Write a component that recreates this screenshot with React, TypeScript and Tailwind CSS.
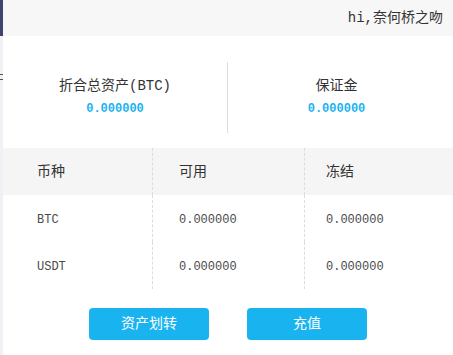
import React from "react"

const mono = { fontFamily: '"Liberation Mono", "Noto Sans CJK SC", monospace' }

const rows = [
  { coin: "BTC", avail: "0.000000", frozen: "0.000000" },
  { coin: "USDT", avail: "0.000000", frozen: "0.000000" },
]

const cols = ["w-[150px] pl-[34px]", "w-[152px] pl-[26px]", "flex-1 pl-[21px]"]

export default function App() {
  return (
    <div
      className="flex w-[453px] h-[355px] overflow-hidden bg-white text-[#333]"
      style={{ fontFamily: '"Liberation Mono", "Noto Sans CJK SC", monospace' }}
    >
      {/* page behind the panel */}
      <div className="w-[3px] flex flex-col shrink-0 overflow-hidden">
        <div className="h-[36px] bg-[#3d4470]"></div>
        <div className="flex-1 bg-[#f0f0f5] flex flex-col">
          <div className="mt-[38px] h-px w-[3px] bg-[#555]"></div>
          <div className="mt-[4px] h-px w-[3px] bg-[#555]"></div>
        </div>
      </div>

      <div className="flex-1 flex flex-col">
        {/* top bar */}
        <div className="h-[36px] bg-[#f7f7f7] flex items-center justify-end pr-[10px] text-[14px] text-[#333]">
          hi,奈何桥之吻
        </div>

        {/* summary */}
        <div className="flex h-[112px]">
          <div className="w-[224px] flex flex-col items-center pt-[40px]">
            <div className="text-[14px] leading-[20px]">折合总资产(BTC)</div>
            <div className="mt-[4px] text-[12px] leading-[18px] text-[#1ab3ef] font-semibold" style={mono}>
              0.000000
            </div>
          </div>
          <div className="w-px h-[71px] mt-[26px] bg-[#dddddd]"></div>
          <div className="flex-1 flex flex-col items-center pt-[40px] pr-[8px]">
            <div className="text-[14px] leading-[20px]">保证金</div>
            <div className="mt-[4px] text-[12px] leading-[18px] text-[#1ab3ef] font-semibold" style={mono}>
              0.000000
            </div>
          </div>
        </div>

        {/* table */}
        <div className="flex flex-col">
          <div className="flex h-[47px] bg-[#f5f5f5] text-[14px] text-[#333]">
            {["币种", "可用", "冻结"].map((h, i) => (
              <div
                key={h}
                className={`${cols[i]} flex items-center pt-[2px] ${i < 2 ? "border-r border-dashed border-[#dcdcdc]" : ""}`}
              >
                {h}
              </div>
            ))}
          </div>
          {rows.map((r) => (
            <div key={r.coin} className="flex h-[47px] text-[12px] text-[#4a4a4a]">
              {[r.coin, r.avail, r.frozen].map((v, i) => (
                <div
                  key={i}
                  className={`${cols[i]} flex items-center pt-[2px] ${i < 2 ? "border-r border-dashed border-[#dcdcdc]" : ""}`}
                >
                  {v}
                </div>
              ))}
            </div>
          ))}
        </div>

        {/* buttons */}
        <div className="flex justify-center gap-[38px] mt-[19px]">
          <button className="w-[120px] h-[32px] rounded-[4px] bg-[#19b4f0] text-white text-[14px]">资产划转</button>
          <button className="w-[120px] h-[32px] rounded-[4px] bg-[#19b4f0] text-white text-[14px]">充值</button>
        </div>
      </div>
    </div>
  )
}
